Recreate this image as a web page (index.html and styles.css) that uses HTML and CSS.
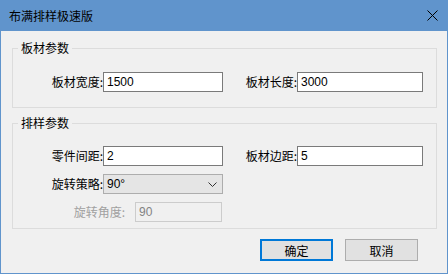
FILE: index.html
```html
<!DOCTYPE html>
<html lang="zh-CN">
<head>
  <meta charset="UTF-8" />
  <title>布满排样极速版</title>
  <link rel="stylesheet" href="styles.css">
</head>
<body>
  <div class="dialog">
    <div class="titlebar">
      <span class="title">布满排样极速版</span>
      <svg class="close" width="11" height="11" viewBox="0 0 11 11">
        <path d="M0.5 0.5 L10.5 10.5 M10.5 0.5 L0.5 10.5" stroke="#000" stroke-width="1" fill="none"/>
      </svg>
    </div>

    <div class="content">
      <fieldset class="group group-board">
        <legend>板材参数</legend>
        <div class="grid">
          <label for="width">板材宽度:</label>
          <input type="text" id="width" value="1500" />
          <label for="length">板材长度:</label>
          <input type="text" id="length" value="3000" />
        </div>
      </fieldset>

      <fieldset class="group group-layout">
        <legend>排样参数</legend>
        <div class="grid">
          <label for="spacing">零件间距:</label>
          <input type="text" id="spacing" value="2" />
          <label for="margin">板材边距:</label>
          <input type="text" id="margin" value="5" />

          <label>旋转策略:</label>
          <div class="combo">
            <span>90°</span>
            <svg class="chevron" width="9" height="5" viewBox="0 0 9 5">
              <path d="M0.5 0.5 L4.5 4.5 L8.5 0.5" stroke="#333" stroke-width="1" fill="none"/>
            </svg>
          </div>

          <div class="angle-row">
            <label class="disabled" for="angle">旋转角度:</label>
            <input type="text" id="angle" value="90" disabled />
          </div>
        </div>
      </fieldset>

      <div class="buttons">
        <button class="primary">确定</button>
        <button>取消</button>
      </div>
    </div>
  </div>
</body>
</html>
```

FILE: styles.css
```css
body {
  margin: 0;
  font-family: "Noto Sans CJK SC", sans-serif;
  font-size: 12px;
  color: #000;
}

.dialog {
  width: 448px;
  height: 274px;
  box-sizing: border-box;
  border: 1px solid #6094cc;
  border-top: none;
  background: #f0f0f0;
}

.titlebar {
  height: 31px;
  margin: 0 -1px;
  background: #6094cc;
  display: flex;
  align-items: center;
  justify-content: space-between;
  padding: 0 10px 0 9px;
}

.title {
  font-size: 12px;
  line-height: 14px;
}

.close {
  display: block;
}

.content {
  padding: 10px 10px 0 11px;
}

.group {
  margin: 0;
  padding: 17px 0 15px 0;
  border: 1px solid #dcdcdc;
  min-width: 0;
}

.group legend {
  margin-left: 5px;
  padding: 0 3px;
  line-height: 14px;
}

.group-layout {
  margin-top: 8px;
  padding: 16px 0 6px 0;
}

.grid {
  display: grid;
  grid-template-columns: 90px 120px 74px 126px;
  grid-auto-rows: 20px;
  row-gap: 8px;
  align-items: center;
}

.grid label {
  text-align: right;
  line-height: 20px;
}

input {
  box-sizing: border-box;
  height: 20px;
  width: 100%;
  margin: 0;
  padding: 0 3px;
  border: 1px solid #7a7a7a;
  background: #fff;
  font-family: "Liberation Sans", "Noto Sans CJK SC", sans-serif;
  font-size: 12px;
  color: #000;
  outline: none;
}

input:disabled {
  border-color: #cccccc;
  background: #f0f0f0;
  color: #838383;
}

.combo {
  box-sizing: border-box;
  height: 20px;
  border: 1px solid #adadad;
  background: #e5e5e5;
  display: flex;
  align-items: center;
  justify-content: space-between;
  padding: 0 5px 0 3px;
  font-family: "Liberation Sans", "Noto Sans CJK SC", sans-serif;
}

.chevron {
  display: block;
}

.angle-row {
  grid-column: 1 / span 2;
  display: flex;
  align-items: center;
}

.angle-row label {
  width: 112px;
  margin-right: 10px;
  flex: none;
}

.angle-row input {
  width: 87px;
}

label.disabled {
  color: #a0a0a0;
}

.buttons {
  display: flex;
  justify-content: flex-end;
  gap: 12px;
  margin-top: 10px;
  padding-right: 19px;
}

button {
  box-sizing: border-box;
  width: 73px;
  height: 22px;
  border: 1px solid #adadad;
  background: #e1e1e1;
  font-family: "Noto Sans CJK SC", sans-serif;
  font-size: 12px;
  color: #000;
  padding: 0;
}

button.primary {
  border: 2px solid #0078d7;
}
```
